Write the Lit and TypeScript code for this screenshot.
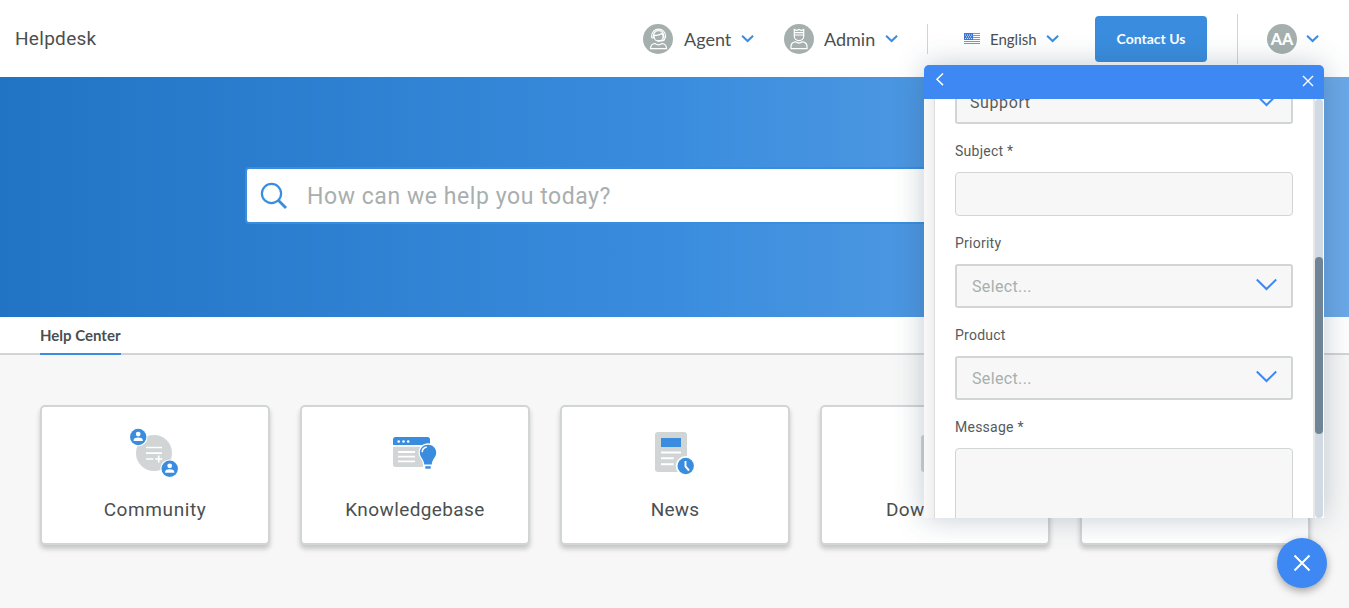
import { LitElement, html, css, svg } from "lit";
import { customElement, property } from "lit/decorators.js";

const userBadge = (x: number, y: number) => svg`
  <circle cx=${x} cy=${y} r="9.3" fill="#fff"></circle>
  <circle cx=${x} cy=${y} r="8.2" fill="#3a8dde"></circle>
  <circle cx=${x} cy=${y - 2.9} r="2.4" fill="#fff"></circle>
  <path d="M${x - 4.6} ${y + 4}v-.9c0-1.7 2.2-2.5 4.6-2.5s4.6.8 4.6 2.5v.9z" fill="#fff"></path>`;

const communityIcon = svg`
  <g transform="translate(-3 0)">
    <circle cx="34" cy="33" r="18" fill="#d1d5d5"></circle>
    <path d="M26 27.500h16M26 33.200h16M26 39h7.300M35.200 39h7M38.700 35.500v7" stroke="#fff" stroke-width="1.7" fill="none"></path>
    ${userBadge(18.2, 17)}${userBadge(49.7, 48.7)}
  </g>`;

const knowledgeIcon = svg`
  <g transform="translate(-3 0)">
    <path d="M13 26.700h37v20.300H15.500a2.500 2.500 0 0 1-2.500-2.500z" fill="#d1d5d5"></path>
    <path d="M13 25v-5.500a2.500 2.500 0 0 1 2.500-2.500h32a2.500 2.500 0 0 1 2.500 2.500V25z" fill="#3a8dde"></path>
    <g fill="#fff"><circle cx="18.700" cy="21.500" r="1.300"></circle><circle cx="23.500" cy="21.500" r="1.300"></circle><circle cx="28.200" cy="21.500" r="1.300"></circle></g>
    <path d="M18 32h17M18 36.700h17M18 41.300h17" stroke="#fff" stroke-width="1.800"></path>
    <path d="M48 23.300c-5.200 0-9.400 4.100-9.400 9.300 0 5.200 4.200 7 4.400 12v5.400h10v-5.400c.2-5 4.400-6.800 4.400-12 0-5.200-4.200-9.300-9.400-9.300z" fill="#fff"></path>
    <path d="M48 24.700c-4.600 0-8.200 3.400-8.200 7.900 0 4.900 4 6.500 4.500 11.900h7.400c.5-5.400 4.500-7 4.500-11.900 0-4.500-3.600-7.900-8.200-7.900z" fill="#3a8dde"></path>
    <path d="M45.300 46.200h5.400v2.500h-5.400z" fill="#3a8dde"></path>
    <path d="M42.200 32.200c0-2.700 1.800-4.700 4.600-5.200" stroke="#fff" stroke-width="1.600" fill="none"></path>
  </g>`;

const newsIcon = svg`
  <g transform="translate(-3 0)">
    <rect x="15" y="12" width="32" height="40" rx="3" fill="#d1d5d5"></rect>
    <rect x="21" y="18" width="20" height="9" fill="#3a8dde"></rect>
    <path d="M21 32.500h20M21 38.300h12.700M21 44.300h12.700" stroke="#fff" stroke-width="2"></path>
    <circle cx="45.700" cy="46" r="10" fill="#fff"></circle>
    <circle cx="45.700" cy="46" r="8.200" fill="#3a8dde"></circle>
    <path d="M45.500 41v5.500l3.500 4" stroke="#fff" stroke-width="1.900" fill="none"></path>
  </g>`;

const downloadsIcon = svg`<rect x="18" y="15" width="33" height="37" rx="3" fill="#d1d5d5"></rect>`;

const agentIcon = svg`
  <circle cx="15" cy="15" r="15" fill="#a5b0ae"></circle>
  <g fill="none" stroke="#fff" stroke-width="1.200">
    <path d="M11 11.200c2.600.6 5.600-.1 7.600-1.700 1 .8 1.500 1.900 1.500 3.100a4.500 4.500 0 0 1-9 0z"></path>
    <path d="M8.700 14V12a6.900 6.900 0 0 1 13.800 0v2M10.500 14v-2.200a5.100 5.100 0 0 1 10.200 0V14M8.700 14h1.800M20.700 14h1.800"></path>
    <path d="M21.500 14.500c0 1.500-1.500 2.300-3 2.300h-4" stroke-width="1.500"></path>
    <path d="M7.500 24.700c0-3.700 1.200-4.900 4.500-5.200 2 1.500 5 1.500 7 0 3.300.3 4.500 1.500 4.500 5.200z"></path>
  </g>`;

const adminIcon = svg`
  <circle cx="15" cy="15" r="15" fill="#a5b0ae"></circle>
  <g fill="none" stroke="#fff" stroke-width="1.200">
    <path d="M10.300 8.700V5.500l2.500 1 2.200-1 2.200 1 2.500-1v3.200zM10.300 8.700v3.600a4.700 4.400 0 0 0 9.400 0V8.700M10.300 11h9.400"></path>
    <path d="M7 24.700v-2.200c0-3 1.400-4.500 4.700-4.700 2 1.500 4.600 1.500 6.600 0 3.300.2 4.700 1.700 4.700 4.700v2.200z"></path>
  </g>`;

@customElement("nav-chevron")
class NavChevron extends LitElement {
  static styles = css`
    :host { display: block; width: 14px; height: 9px; }
    svg { display: block; }
  `;
  render() {
    return html`<svg width="14" height="9" viewBox="0 0 14 9"><path d="M1.100 1.700l5.500 5.300 5.500-5.300" fill="none" stroke="#3a8dde" stroke-width="2"></path></svg>`;
  }
}

@customElement("topic-card")
class TopicCard extends LitElement {
  @property() label = "";
  @property() spacing = "0";
  @property({ attribute: false }) icon: unknown = null;
  static styles = css`
    :host {
      box-sizing: border-box; display: flex; flex: none; flex-direction: column; align-items: center;
      width: 230px; height: 140px; padding-top: 13px; background: #fff;
      border: 2px solid #d1d5d5; border-radius: 5px; box-shadow: 0 4px 5px rgba(0, 0, 0, 0.2);
    }
    svg { display: block; flex: none; }
    .label { font: 400 19px/24px Roboto, sans-serif; color: #4a4f50; margin-top: 14px; white-space: nowrap; }
  `;
  render() {
    return html`<svg width="64" height="64" viewBox="0 0 64 64">${this.icon}</svg>
      <div class="label" style="letter-spacing:${this.spacing}px">${this.label}</div>`;
  }
}

@customElement("form-field")
class FormField extends LitElement {
  @property() label = "";
  @property() kind = "input";
  @property() value = "";
  static styles = css`
    :host { display: block; }
    .label { padding-top: 6px; height: 42px; font: 400 14px/42px Roboto, sans-serif; color: #565b5c; letter-spacing: 0.25px; }
    .box { box-sizing: border-box; height: 44px; background: #f7f7f7; border: 1px solid #d1d5d5; border-radius: 4px; }
    .textarea { height: 120px; }
    .select {
      display: flex; align-items: center; justify-content: space-between; padding: 0 14px 0 15px;
      border-width: 2px; border-radius: 3px; font: 400 16px/40px Roboto, sans-serif; color: #a5b0ae;
      letter-spacing: 0.35px;
    }
    .select span { padding-top: 1px; }
    .chosen { color: #565b5c; padding-left: 13px; letter-spacing: 0.6px; }
    svg { display: block; margin-top: -2px; }
  `;
  render() {
    const select = this.kind !== "input" && this.kind !== "textarea";
    return html`
      ${this.label ? html`<div class="label">${this.label}</div>` : null}
      <div class="box ${select ? "select" : ""} ${this.kind}">
        ${select
          ? html`<span>${this.value}</span><svg width="22" height="14" viewBox="0 0 22 14"><path d="M1.800 1.500l9.700 9.500 9.700-9.500" fill="none" stroke="#3d88f2" stroke-width="2"></path></svg>`
          : null}
      </div>`;
  }
}

@customElement("support-widget")
class SupportWidget extends LitElement {
  static styles = css`
    :host {
      display: flex; flex-direction: column; width: 400px; height: 453px; background: #fff;
      border-radius: 5px 5px 0 0; box-shadow: 0 0 30px rgba(40, 70, 90, 0.28);
    }
    .bar {
      box-sizing: border-box; flex: none; height: 34px; padding: 0 10px 0 11px; background: #3d88f2;
      border-radius: 5px 5px 0 0; display: flex; justify-content: space-between; align-items: flex-start;
    }
    .back { margin-top: 7px; }
    .close { margin-top: 10px; }
    .body { flex: 1; min-height: 0; display: flex; overflow: hidden; }
    .gutter { width: 10px; background: linear-gradient(90deg, #f9f9f9, #efefef); border-right: 1px solid #dcdcdc; }
    .form { width: 338px; padding: 0 20px; margin-top: -19px; }
    .track { width: 8px; margin-left: auto; margin-right: 1px; background: #d1dae2; border-radius: 4px; }
    .edge { width: 2px; background: #e5e7e8; }
    .thumb { margin-top: 158px; height: 177px; background: #6f8596; border-radius: 4px; }
  `;
  render() {
    return html`
      <div class="bar">
        <svg class="back" width="10" height="15" viewBox="0 0 10 15"><path d="M8 1.500L2 7.300l6 5.800" fill="none" stroke="#fff" stroke-width="1.500"></path></svg>
        <svg class="close" width="12" height="12" viewBox="0 0 12 12"><path d="M1 1l10 10M11 1L1 11" stroke="#fff" stroke-width="1.400"></path></svg>
      </div>
      <div class="body">
        <div class="gutter"></div>
        <div class="form">
          <form-field kind="chosen" value="Support"></form-field>
          <form-field label="Subject *"></form-field>
          <form-field label="Priority" kind="pick" value="Select..."></form-field>
          <form-field label="Product" kind="pick" value="Select..."></form-field>
          <form-field label="Message *" kind="textarea"></form-field>
        </div>
        <div class="edge"></div>
        <div class="track"><div class="thumb"></div></div>
      </div>`;
  }
}

@customElement("app-root")
class AppRoot extends LitElement {
  static styles = css`
    :host { display: block; position: relative; width: 1349px; height: 608px; overflow: hidden; background: #f7f7f7; color: #4a4f50; }
    svg { display: block; flex: none; }
    .header { box-sizing: border-box; height: 77px; background: #fff; display: flex; align-items: center; padding: 0 29px 0 15px; }
    .logo { font: 400 19px/24px Roboto, sans-serif; letter-spacing: 0.3px; margin-right: auto; }
    .item { display: flex; align-items: center; font: 400 18px/24px Lato, sans-serif; }
    .item span { white-space: nowrap; }
    .agent { width: 48px; margin: 0 9px 0 11px; }
    .admin { width: 51px; margin: 0 10px; }
    .gap { margin-left: 29px; }
    .split { width: 1px; height: 30px; background: #d1d5d5; margin: 1px 36px 0 28px; }
    .language { font-size: 15px; }
    .english { width: 47px; margin: 1px 9px 0 10px; }
    .contact { width: 112px; height: 46px; margin: 1px 30px 0 35px; border-radius: 4px; background: #3a8dde; color: #fff; font: 700 14px/46px Lato, sans-serif; text-align: center; }
    .tall { width: 1px; height: 50px; background: #d1d5d5; margin: 1px 29px 0 0; }
    .avatar { width: 30px; height: 30px; margin-right: 9px; border-radius: 50%; background: #a5b0ae; color: #fff; font: 900 16px/29px Lato, sans-serif; text-align: center; }
    .hero { box-sizing: border-box; height: 240px; padding: 90px 245px 0; background: linear-gradient(90deg, #2173c4 0%, #3a8dde 50%, #6ba8e8 100%); }
    .search { box-sizing: border-box; height: 57px; border: 2px solid #3a8dde; border-radius: 4px; background: #fff; display: flex; align-items: center; padding-left: 13px; }
    .hint { margin: 2px 0 0 19px; font: 400 23px/28px Roboto, sans-serif; color: #a9aeae; letter-spacing: 0.56px; }
    .tabs { box-sizing: border-box; height: 38px; padding-left: 40px; background: #fff; border-bottom: 2px solid #d1d5d5; display: flex; }
    .tab { box-sizing: border-box; width: 81px; height: 38px; border-bottom: 2px solid #3a8dde; font: 700 15px/37px Lato, sans-serif; white-space: nowrap; }
    .cards { display: flex; gap: 30px; padding: 50px 40px 0; }
    .widget { position: absolute; left: 924px; top: 65px; }
    .launcher { position: absolute; left: 1277px; top: 538px; width: 50px; height: 50px; border-radius: 50%; background: #3d88f2; display: grid; place-items: center; box-shadow: 0 3px 8px rgba(0, 0, 0, 0.35); }
  `;
  render() {
    return html`
      <div class="header">
        <div class="logo">Helpdesk</div>
        <div class="item"><svg width="30" height="30">${agentIcon}</svg><span class="agent">Agent</span><nav-chevron></nav-chevron></div>
        <div class="item gap"><svg width="30" height="30">${adminIcon}</svg><span class="admin">Admin</span><nav-chevron></nav-chevron></div>
        <div class="split"></div>
        <div class="item language">
          <svg width="16" height="11" viewBox="0 0 16 11">
            <rect width="16" height="11" fill="#fff"></rect>
            <path d="M0 .5h16M0 2.500h16M0 4.500h16M0 6.500h16M0 8.500h16M0 10.500h16" stroke="#f0705c" stroke-width="1"></path>
            <rect width="9" height="7" fill="#3e78d4"></rect>
            <path d="M1 2h7M2 3.800h6M1 5.500h7" stroke="#fff" stroke-width=".8" stroke-dasharray="1 1"></path>
          </svg>
          <span class="english">English</span><nav-chevron></nav-chevron>
        </div>
        <div class="contact">Contact Us</div>
        <div class="tall"></div>
        <div class="item"><div class="avatar">AA</div><nav-chevron></nav-chevron></div>
      </div>
      <div class="hero">
        <div class="search">
          <svg width="28" height="28" viewBox="0 0 28 28"><circle cx="11.500" cy="11.500" r="9.600" fill="none" stroke="#3a8dde" stroke-width="2.200"></circle><path d="M18.500 18.500l7.500 7.500" stroke="#3a8dde" stroke-width="2.800"></path></svg>
          <span class="hint">How can we help you today?</span>
        </div>
      </div>
      <div class="tabs"><div class="tab">Help Center</div></div>
      <div class="cards">
        <topic-card label="Community" spacing="0.6" .icon=${communityIcon}></topic-card>
        <topic-card label="Knowledgebase" spacing="0.4" .icon=${knowledgeIcon}></topic-card>
        <topic-card label="News" spacing="0.2" .icon=${newsIcon}></topic-card>
        <topic-card label="Downloads" spacing="0.4" .icon=${downloadsIcon}></topic-card>
        <topic-card></topic-card>
      </div>
      <support-widget class="widget"></support-widget>
      <div class="launcher"><svg width="18" height="18" viewBox="0 0 18 18"><path d="M1.500 1.500l15 15M16.500 1.500l-15 15" stroke="#fff" stroke-width="2"></path></svg></div>`;
  }
}
